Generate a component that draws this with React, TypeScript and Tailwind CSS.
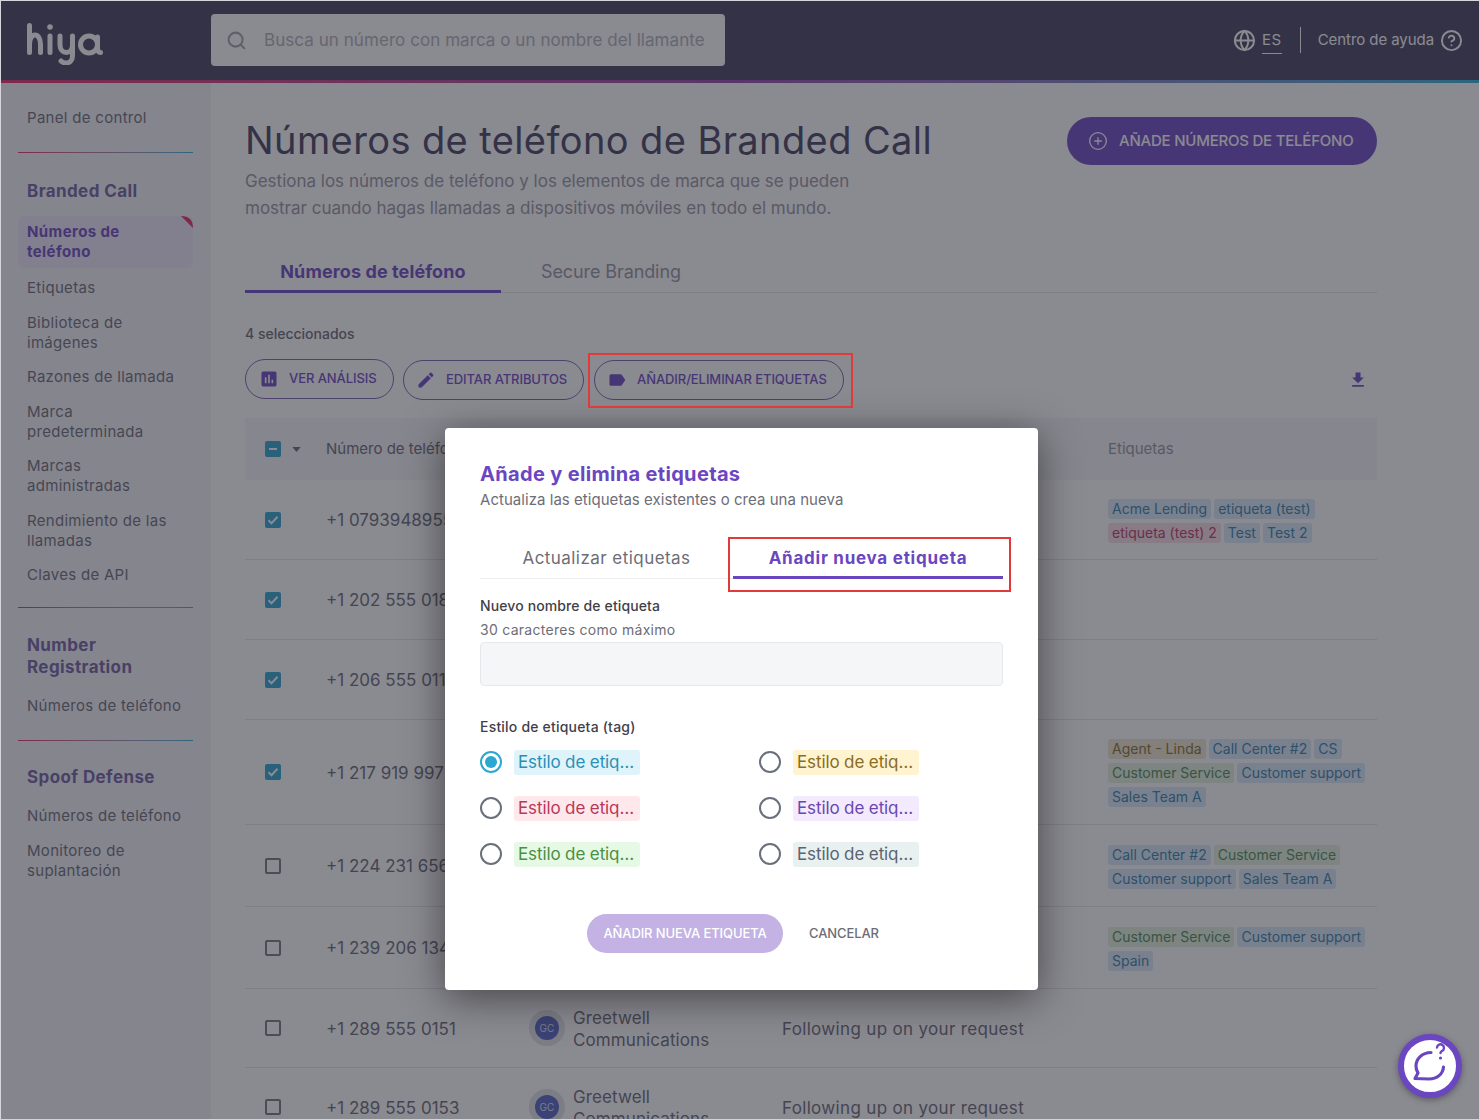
import React from "react";
import { Search, Globe, CircleHelp, CirclePlus } from "lucide-react";

const tone: Record<string, string> = {
  blue: "bg-[#dcedf8] text-[#3f86ae]",
  red: "bg-[#f8e2e8] text-[#c2406a]",
  yellow: "bg-[#f0e9d2] text-[#8d7538]",
  green: "bg-[#e4f3df] text-[#54905a]",
};

function Tag({ t, c = "blue" }: { t: string; c?: string }) {
  return <span className={`h-[20px] rounded-[3px] px-[4px] text-[14px] leading-[20px] whitespace-nowrap ${tone[c]}`}>{t}</span>;
}

function Check({ on }: { on?: boolean }) {
  return on ? (
    <span className="flex h-[16px] w-[16px] items-center justify-center rounded-[2px] bg-[#35a9cf]">
      <svg viewBox="0 0 16 16" className="h-[16px] w-[16px]" fill="none" stroke="#ffffff" strokeWidth="2"><path d="M3.5 8.2l3 3 6-6.4" /></svg>
    </span>
  ) : (
    <span className="block h-[16px] w-[16px] rounded-[2px] border-2 border-[#7d7d88]" />
  );
}

function Row({ h, on, phone, brand, reason, tags }: { h: string; on?: boolean; phone: string; brand?: boolean; reason?: boolean; tags?: [string, string?][] }) {
  return (
    <div className={`flex items-center border-b border-[#e6e6ea] ${h}`}>
      <div className="flex w-[81px] shrink-0 pl-[20px]"><Check on={on} /></div>
      <div className="w-[203px] shrink-0 pt-[3px] text-[17px] text-[#6f6f7a]">{phone}</div>
      <div className="flex w-[253px] shrink-0 items-center gap-[8px]">
        {brand && (
          <>
            <span className="flex h-[36px] w-[36px] items-center justify-center rounded-full bg-[#e3e3e8]">
              <span className="flex h-[24px] w-[24px] items-center justify-center rounded-full bg-[#5b69c4] text-[10px] text-[#dfe2f5]">GC</span>
            </span>
            <span className="pt-[2px] text-[17px] leading-[22px] tracking-[0.1px] text-[#6f6f7a]">Greetwell<br />Communications</span>
          </>
        )}
      </div>
      <div className="w-[326px] shrink-0 pt-[3px] text-[17px] tracking-[0.33px] text-[#6f6f7a]">{reason && "Following up on your request"}</div>
      <div className="flex flex-1 flex-wrap gap-x-[3px] gap-y-[4px] pt-[2px]">
        {tags?.map(([t, c]) => <Tag key={t} t={t} c={c} />)}
      </div>
    </div>
  );
}

function Divider({ className }: { className: string }) {
  return <div className={`h-px bg-gradient-to-r from-[#e8336e] to-[#35b4dc] ${className}`} />;
}

function Side({ children, className = "" }: { children: React.ReactNode; className?: string }) {
  return <div className={`pl-[9px] text-[15px] leading-[20px] tracking-[0.3px] text-[#72727c] ${className}`}>{children}</div>;
}

function Heading({ children, className = "" }: { children: React.ReactNode; className?: string }) {
  return <div className={`pl-[9px] text-[17px] leading-[22px] font-bold tracking-[0.4px] text-[#7566a6] ${className}`}>{children}</div>;
}

function Pill({ icon, label, className }: { icon: string; label: string; className: string }) {
  return (
    <div className={`flex h-[40px] items-center rounded-full border border-[#7d6bb0] text-[13px] font-medium tracking-[-0.08px] text-[#7350c4] ${className}`}>
      <svg viewBox="0 0 24 24" className="h-[20px] w-[20px] shrink-0" fill="#7350c4"><path d={icon} /></svg>
      <span className="ml-[10px] whitespace-nowrap">{label}</span>
    </div>
  );
}

function Option({ t, cls, on }: { t: string; cls: string; on?: boolean }) {
  return (
    <div className="flex h-[26px] items-center gap-[12px]">
      <span className={`flex h-[22px] w-[22px] shrink-0 items-center justify-center rounded-full border-2 ${on ? "border-[#2ca7cf]" : "border-[#6a6f7c]"}`}>
        {on && <span className="h-[12px] w-[12px] rounded-full bg-[#2ca7cf]" />}
      </span>
      <span className={`flex h-[25px] w-[126px] items-center overflow-hidden rounded-[3px] px-[4px] pt-[2px] text-[17px] tracking-[-0.12px] whitespace-nowrap ${cls}`}>{t}</span>
    </div>
  );
}

export default function App() {
  return (
    <div className="relative h-[1119px] w-[1479px] overflow-hidden bg-white font-[Inter,sans-serif]">
      <header className="flex h-[83px] flex-col">
        <div className="flex h-[80px] items-center bg-[#4c4865] pl-[27px] pr-[16px]">
          <svg viewBox="0 0 76 42" className="mt-[8px] h-[42px] w-[76px] shrink-0" fill="none" stroke="#ffffff" strokeWidth="5" strokeLinecap="round" strokeLinejoin="round">
            <path d="M2.5 2.5V29.5M2.5 21c0-6 3-9 5.5-9s5.5 3 5.5 9v8.5" />
            <path d="M23 13v16.5" />
            <circle cx="23" cy="4" r="2.8" fill="#ffffff" stroke="none" />
            <path d="M33 13v9c0 5 3 7.5 6.5 7.5s6-2.5 6-7.5v-9M45.5 22v11c0 4.5-3 7-6.5 7-2 0-3.5-.5-5-2" />
            <circle cx="62" cy="21.5" r="8.5" />
            <path d="M70.5 14v11c0 3 1 4.5 3 4.5" />
          </svg>
          <div className="ml-[108px] flex h-[52px] w-[514px] items-center rounded-[4px] bg-white pl-[15px]">
            <Search className="h-[21px] w-[21px] text-[#a8a8b0]" strokeWidth={2.3} />
            <span className="ml-[17px] pt-[2px] text-[17px] tracking-[0.06px] text-[#b4b4bb]">Busca un número con marca o un nombre del llamante</span>
          </div>
          <div className="ml-auto flex items-center">
            <Globe className="h-[23px] w-[23px] text-white" strokeWidth={2.1} />
            <span className="ml-[6px] border-b border-white pb-[3px] pt-[4px] text-[15px] leading-[20px] tracking-[0.5px] text-white">ES</span>
            <span className="ml-[18px] h-[26px] w-px bg-white" />
            <span className="ml-[17px] text-[15px] tracking-[-0.07px] text-white">Centro de ayuda</span>
            <CircleHelp className="ml-[6px] h-[23px] w-[23px] text-white" strokeWidth={2} />
          </div>
        </div>
        <div className="h-[3px] bg-gradient-to-r from-[#e8336e] via-[#9a4fb0] to-[#35b4dc]" />
      </header>

      <div className="flex">
        <aside className="h-[1036px] w-[211px] shrink-0 bg-[#f5f5f9] pl-[18px] pr-[18px] pt-[25px]">
          <Side>Panel de control</Side>
          <Divider className="mt-[24px]" />
          <Heading className="mt-[27px]">Branded Call</Heading>
          <div className="relative mt-[14px] h-[52px] overflow-hidden rounded-[6px] bg-[#eee8f8] pt-[6px]">
            <div className="pl-[9px] text-[15px] leading-[20px] font-bold tracking-[0.4px] text-[#7350c4]">Números de<br />teléfono</div>
            <svg viewBox="0 0 12 12" className="absolute right-0 top-0 h-[12px] w-[12px]" fill="#e8336e"><path d="M0 0Q12 0 12 12Z" /></svg>
          </div>
          <div className="mt-[10px] flex flex-col gap-[14.5px]">
            <Side>Etiquetas</Side>
            <Side>Biblioteca de<br />imágenes</Side>
            <Side>Razones de llamada</Side>
            <Side>Marca<br />predeterminada</Side>
            <Side>Marcas<br />administradas</Side>
            <Side>Rendimiento de las<br />llamadas</Side>
            <Side>Claves de API</Side>
          </div>
          <Divider className="mt-[22px]" />
          <Heading className="mt-[26px]">Number<br />Registration</Heading>
          <Side className="mt-[18px]">Números de teléfono</Side>
          <Divider className="mt-[24px]" />
          <Heading className="mt-[25px]">Spoof Defense</Heading>
          <Side className="mt-[18px]">Números de teléfono</Side>
          <Side className="mt-[15px]">Monitoreo de<br />suplantación</Side>
        </aside>

        <main className="w-[1166px] shrink-0 pl-[34px] pt-[34px]">
          <div className="w-[1132px]">
            <div className="flex items-start justify-between">
              <div>
                <h1 className="text-[38px] leading-[46px] tracking-[0.4px] text-[#4c4865]">Números de teléfono de Branded Call</h1>
                <p className="mt-[5px] text-[17px] leading-[27px] text-[#9a9aa2]">Gestiona los números de teléfono y los elementos de marca que se pueden<br />mostrar cuando hagas llamadas a dispositivos móviles en todo el mundo.</p>
              </div>
              <div className="flex h-[48px] w-[310px] items-center rounded-full bg-[#7350c4] pl-[21px] text-[15px] font-medium tracking-[-0.22px] text-white">
                <CirclePlus className="h-[20px] w-[20px]" strokeWidth={1.6} />
                <span className="ml-[11px] whitespace-nowrap">AÑADE NÚMEROS DE TELÉFONO</span>
              </div>
            </div>

            <div className="mt-[25px] flex h-[46px] items-start border-b border-[#e6e6ea]">
              <div className="flex h-[46px] w-[256px] justify-center border-b-[3px] border-[#7350c4] pt-[11px] text-[18px] font-bold tracking-[0.1px] text-[#7350c4]">Números de teléfono</div>
              <div className="ml-[40px] pt-[11px] text-[18px] tracking-[-0.1px] text-[#9a9aa2]">Secure Branding</div>
            </div>

            <div className="mt-[31px] text-[14px] font-medium leading-[20px] text-[#6f6f7a]">4 seleccionados</div>

            <div className="mt-[16px] flex items-center justify-between">
              <div className="flex">
                <Pill icon="M19 3H5c-1.1 0-2 .9-2 2v14c0 1.1.9 2 2 2h14c1.1 0 2-.9 2-2V5c0-1.1-.9-2-2-2zM9 17H7v-7h2v7zm4 0h-2V7h2v10zm4 0h-2v-4h2v4z" label="VER ANÁLISIS" className="-mt-px w-[149px] pl-[13px]" />
                <Pill icon="M3 17.25V21h3.75L17.81 9.94l-3.75-3.75L3 17.25zM20.71 7.04c.39-.39.39-1.02 0-1.41l-2.34-2.34c-.39-.39-1.02-.39-1.41 0l-1.83 1.83 3.75 3.75 1.83-1.83z" label="EDITAR ATRIBUTOS" className="ml-[9px] w-[181px] pl-[12px]" />
                <Pill icon="M17.63 5.84C17.27 5.33 16.67 5 16 5L5 5.01C3.9 5.01 3 5.9 3 7v10c0 1.1.9 1.99 2 1.99L16 19c.67 0 1.27-.33 1.63-.84L22 12l-4.37-6.16z" label="AÑADIR/ELIMINAR ETIQUETAS" className="ml-[10px] w-[250px] pl-[12px]" />
              </div>
              <svg viewBox="0 0 24 24" className="mr-[9px] h-[20px] w-[20px]" fill="#7350c4"><path d="M19 9h-4V3H9v6H5l7 7 7-7zM5 18v2h14v-2H5z" /></svg>
            </div>

            <div className="mt-[18px] flex h-[62px] items-center bg-[#f6f6f8] text-[15px] text-[#6f6f7a]">
              <div className="flex w-[81px] shrink-0 items-center pl-[20px]">
                <span className="flex h-[16px] w-[16px] items-center justify-center rounded-[2px] bg-[#35a9cf]"><span className="h-[2px] w-[8px] bg-white" /></span>
                <svg viewBox="0 0 10 6" className="ml-[11px] h-[5px] w-[9px]" fill="#6f6f7a"><path d="M0 0h10L5 6z" /></svg>
              </div>
              <div className="w-[782px] shrink-0">Número de teléfono</div>
              <div className="text-[#9a9aa2]">Etiquetas</div>
            </div>

            <Row h="h-[80px]" on phone="+1 0793948955" tags={[["Acme Lending"], ["etiqueta (test)"], ["etiqueta (test) 2", "red"], ["Test"], ["Test 2"]]} />
            <Row h="h-[80px]" on phone="+1 202 555 0188" />
            <Row h="h-[80px]" on phone="+1 206 555 0113" />
            <Row h="h-[105px]" on phone="+1 217 919 9972" tags={[["Agent - Linda", "yellow"], ["Call Center #2"], ["CS"], ["Customer Service", "green"], ["Customer support"], ["Sales Team A"]]} />
            <Row h="h-[82px]" phone="+1 224 231 6565" tags={[["Call Center #2"], ["Customer Service", "green"], ["Customer support"], ["Sales Team A"]]} />
            <Row h="h-[82px]" phone="+1 239 206 1342" tags={[["Customer Service", "green"], ["Customer support"], ["Spain"]]} />
            <Row h="h-[79px]" phone="+1 289 555 0151" brand reason />
            <Row h="h-[79px]" phone="+1 289 555 0153" brand reason />
          </div>
        </main>
      </div>

      <div className="absolute inset-0 bg-[rgba(30,30,45,0.52)]" />
      <div className="absolute inset-0 border-l border-t border-[#d6d6dc]" />

      <div className="absolute left-[445px] top-[428px] h-[562px] w-[593px] rounded-[4px] bg-white px-[35px] pt-[33px] shadow-[0_8px_40px_rgba(0,0,0,0.5)]">
        <div className="text-[20px] font-bold leading-[26px] tracking-[0.33px] text-[#6b46c1]">Añade y elimina etiquetas</div>
        <div className="mt-[3px] text-[15px] leading-[20px] tracking-[0.04px] text-[#6d6d77]">Actualiza las etiquetas existentes o crea una nueva</div>
        <div className="mt-[33px] flex h-[36px] w-[523px]">
          <div className="w-[253px] border-b border-[#eeeef2] pt-[3px] text-center text-[17px] tracking-[0.45px] text-[#6d6d77]">Actualizar etiquetas</div>
          <div className="w-[270px] border-b-[3px] border-[#6b46c1] pt-[3px] text-center text-[17px] font-bold tracking-[0.75px] text-[#6b46c1]">Añadir nueva etiqueta</div>
        </div>
        <div className="mt-[17px] text-[14px] font-medium leading-[20px] tracking-[0.12px] text-[#3f3f4a]">Nuevo nombre de etiqueta</div>
        <div className="mt-[4px] text-[14px] leading-[20px] tracking-[0.28px] text-[#6d6d77]">30 caracteres como máximo</div>
        <div className="mt-[2px] h-[44px] w-[523px] rounded-[4px] border border-[#e6e9ec] bg-[#f4f6f7]" />
        <div className="mt-[31px] text-[14px] font-medium leading-[20px] tracking-[0.2px] text-[#3f3f4a]">Estilo de etiqueta (tag)</div>
        <div className="mt-[12px] grid w-[523px] grid-cols-[279px_1fr] gap-y-[20px]">
          <Option on t="Estilo de etiq…" cls="bg-[#dff3fb] text-[#2b8fb5]" />
          <Option t="Estilo de etiq…" cls="bg-[#fff3d0] text-[#8a6d1f]" />
          <Option t="Estilo de etiq…" cls="bg-[#ffe8ec] text-[#b8385a]" />
          <Option t="Estilo de etiq…" cls="bg-[#f3eafe] text-[#6b46b0]" />
          <Option t="Estilo de etiq…" cls="bg-[#e6f9e4] text-[#4a8f45]" />
          <Option t="Estilo de etiq…" cls="bg-[#e9f0f0] text-[#5a6470]" />
        </div>
        <div className="mt-[47px] flex items-center pl-[107px]">
          <div className="flex h-[39px] w-[196px] items-center justify-center rounded-full bg-[#c3b2e3] text-[13px] font-medium tracking-[-0.1px] text-white">AÑADIR NUEVA ETIQUETA</div>
          <div className="ml-[26px] text-[13px] font-medium tracking-[-0.1px] text-[#6d6d77]">CANCELAR</div>
        </div>
      </div>

      <div className="absolute left-[588px] top-[353px] h-[55px] w-[265px] border-2 border-[#e03a3a]" />
      <div className="absolute left-[728px] top-[537px] h-[55px] w-[283px] border-2 border-[#e03a3a]" />

      <div className="absolute left-[1398px] top-[1034px] h-[64px] w-[64px] rounded-full border-[6px] border-[#6b46c1] bg-white shadow-[0_2px_6px_rgba(0,0,0,0.35)]">
        <svg viewBox="0 0 64 64" className="absolute -left-[6px] -top-[6px] h-[64px] w-[64px]" fill="none" stroke="#6b46c1" strokeWidth="3.2" strokeLinecap="round" strokeLinejoin="round">
          <path d="M33 18.5C24 18.5 18 25 18 32c0 3 1 5.5 2 7l-3 5.5 14 .5c8 0 14-5 14.5-12" />
          <path d="M39 13.5a3.5 3.5 0 1 1 5 3.5c-1 .7-1.5 1-1.5 2" strokeWidth="2.4" />
          <circle cx="42.5" cy="24" r="1.6" fill="#6b46c1" stroke="none" />
        </svg>
      </div>
    </div>
  );
}
